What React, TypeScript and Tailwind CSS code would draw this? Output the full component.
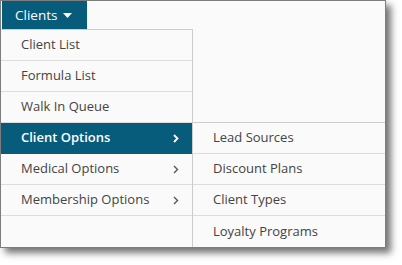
import React from "react";

const mainItems = [
  { label: "Client List" },
  { label: "Formula List" },
  { label: "Walk In Queue" },
  { label: "Client Options", sub: true, active: true },
  { label: "Medical Options", sub: true },
  { label: "Membership Options", sub: true },
];

const subItems = ["Lead Sources", "Discount Plans", "Client Types", "Loyalty Programs"];

function Chevron({ white }: { white?: boolean }) {
  return (
    <svg width="6" height="9" viewBox="0 0 6 9" className="mr-[13px]">
      <path
        d="M1 1 L4.5 4.5 L1 8"
        fill="none"
        stroke={white ? "#ffffff" : "#555555"}
        strokeWidth={white ? 1.8 : 1.4}
      />
    </svg>
  );
}

export default function App() {
  return (
    <div className="w-[402px] h-[265px] bg-white" style={{ fontFamily: "'Open Sans', 'Liberation Sans', sans-serif" }}>
      <div className="w-[386px] h-[248px] border border-[#7d7d7d] bg-[#fafafa] flex flex-col shadow-[5px_5px_7px_rgba(0,0,0,0.55)]">
        <div className="h-[29px] flex">
          <button className="ml-px w-[85px] h-full bg-[#075b7b] text-white text-[13.5px] flex items-center pl-[13px] gap-[6px]">
            <span>Clients</span>
            <svg width="9" height="5" viewBox="0 0 9 5">
              <path d="M0 0 L9 0 L4.5 5 Z" fill="#ffffff" />
            </svg>
          </button>
        </div>
        <div className="flex flex-1">
          <div className="w-[192px] border-t border-r border-[#cdcdcd] flex flex-col">
            {mainItems.map((it) => (
              <div
                key={it.label}
                className={`h-[31px] border-b flex items-center justify-between pl-5 text-[13px] ${
                  it.active
                    ? "bg-[#075b7b] text-white font-semibold border-[#075b7b]"
                    : "text-[#444444] border-[#dddddd]"
                }`}
              >
                <span>{it.label}</span>
                {it.sub && <Chevron white={it.active} />}
              </div>
            ))}
          </div>
          <div className="flex-1 flex flex-col">
            <div className="h-[93px]" />
            <div className="border-t border-[#cdcdcd] flex flex-col">
              {subItems.map((s, i) => (
                <div
                  key={s}
                  className={`h-[31px] flex items-center pl-5 text-[13px] text-[#444444] ${
                    i < subItems.length - 1 ? "border-b border-[#dddddd]" : ""
                  }`}
                >
                  {s}
                </div>
              ))}
            </div>
          </div>
        </div>
      </div>
    </div>
  );
}
